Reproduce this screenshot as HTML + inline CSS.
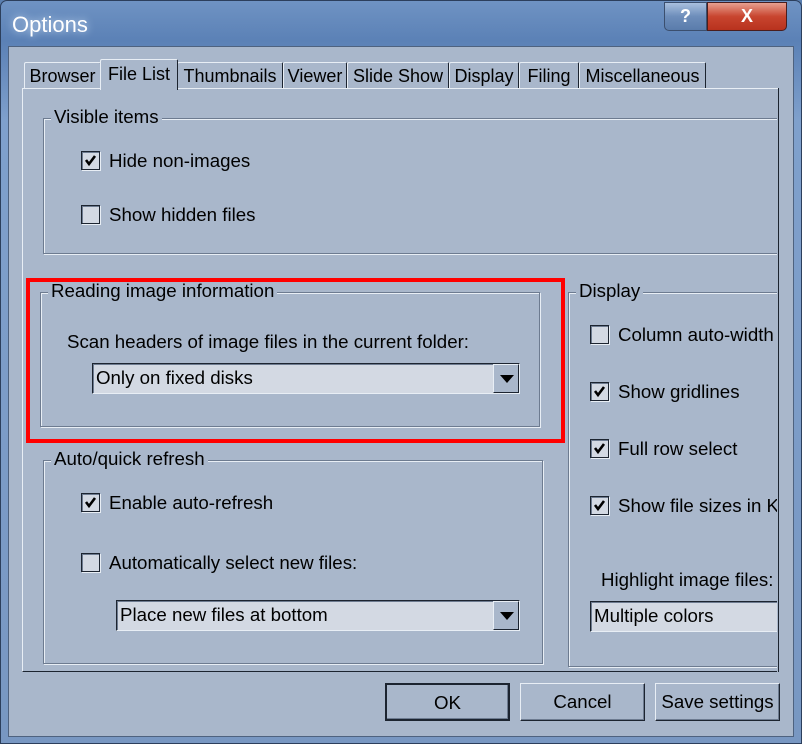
<!DOCTYPE html>
<html><head><meta charset="utf-8"><style>
*{box-sizing:border-box;margin:0;padding:0}
body{width:802px;height:744px;overflow:hidden;background:#5a7fb0;font-family:"Liberation Sans",sans-serif;font-size:18.7px;color:#000;position:relative}
.abs{position:absolute}
#frame{left:0;top:0;width:802px;height:744px;background:linear-gradient(180deg,#6f93c3 0,#5b81b6 40px,#7fa0cc 120px,#7897c2 744px);border:1px solid #2c3f5c;border-radius:7px 7px 0 0}
#client{left:8px;top:46px;width:786px;height:691px;background:#a9b7cb;border:1px solid #4e627f}
.t{position:absolute;white-space:nowrap;line-height:20px}
.grp{position:absolute;border:1px solid #6d7b90;box-shadow:1px 1px 0 #e8eef5,inset 1px 1px 0 #e8eef5}
.lbl{position:absolute;background:#a9b7cb;padding:0 3px;line-height:20px;white-space:nowrap}
.cb{position:absolute;width:19px;height:19px;background:#d3d9e3;border:1px solid #1c2430;box-shadow:inset 1px 1px 0 #6d7b90,1px 1px 0 #e8eef5}
.cb svg{position:absolute;left:1px;top:1px}
.combo{position:absolute;height:31px;background:#d3d9e3;border:1px solid #1c2430;border-right-color:#e8eef5;border-bottom-color:#e8eef5;box-shadow:inset 1px 1px 0 #6d7b90}
.combo .txt{position:absolute;left:3px;top:4px;line-height:20px;white-space:nowrap}
.combo .btn{position:absolute;right:0;top:0;width:26px;height:29px;background:#a9b7cb;border:1px solid #e8eef5;border-right-color:#1c2430;border-bottom-color:#1c2430}
.combo .btn:after{content:"";position:absolute;left:6px;top:10px;border-left:7px solid transparent;border-right:7px solid transparent;border-top:8px solid #000}
.pb{position:absolute;height:38px;background:#a9b7cb;border:1px solid #e8eef5;border-right-color:#1c2430;border-bottom-color:#1c2430;text-align:center;line-height:36px;box-shadow:inset -1px -1px 0 #6d7b90}
.tab{position:absolute;top:62px;height:27px;background:#a9b7cb;border:1px solid #e8eef5;border-right-color:#1c2430;border-bottom:none;text-align:center;line-height:26px;border-radius:2px 2px 0 0;font-size:18px;white-space:nowrap}
</style></head><body>
<div id="frame" class="abs"></div>
<div class="t" style="left:12px;top:15px;color:#fff;font-size:22px;text-shadow:0 0 8px #cfe0f5">Options</div>
<div class="abs" style="left:664px;top:2px;width:43px;height:29px;border:1px solid #3b4f6e;border-radius:0 0 0 5px;background:linear-gradient(#a9c0de,#6d8dba 50%,#5a7cab);color:#fff;text-align:center;font-weight:bold;line-height:27px;font-size:18px">?</div>
<div class="abs" style="left:707px;top:2px;width:80px;height:29px;border:1px solid #4a1e1e;border-radius:0 0 5px 0;background:linear-gradient(#e8a090,#c8452f 50%,#b8321e);color:#fff;text-align:center;font-weight:bold;line-height:27px;font-size:18px">X</div>
<div id="client" class="abs"></div>
<div class="tab" style="left:24px;width:77px">Browser</div>
<div class="tab" style="left:177px;width:106px">Thumbnails</div>
<div class="tab" style="left:283px;width:64px">Viewer</div>
<div class="tab" style="left:347px;width:102px">Slide Show</div>
<div class="tab" style="left:449px;width:70px">Display</div>
<div class="tab" style="left:519px;width:60px">Filing</div>
<div class="tab" style="left:579px;width:127px">Miscellaneous</div>
<div class="abs" style="left:22px;top:88px;width:757px;height:584px;border:1px solid #e8eef5;border-right-color:#1c2430;border-bottom-color:#1c2430;background:#a9b7cb"></div>
<div class="tab" style="left:100px;top:59px;width:78px;height:31px;border-bottom:none;line-height:28px;z-index:2">File List</div>
<div class="grp" style="left:43px;top:118px;width:745px;height:136px;border-right:none"></div>
<div class="lbl" style="left:51px;top:107px">Visible items</div>
<div class="cb" style="left:81px;top:151px"><svg width="15" height="15"><path d="M3 7l3 4 6-8" stroke="#000" stroke-width="2.6" fill="none"/></svg></div>
<div class="t" style="left:109px;top:151px">Hide non-images</div>
<div class="cb" style="left:81px;top:205px"></div>
<div class="t" style="left:109px;top:205px">Show hidden files</div>
<div class="grp" style="left:40px;top:292px;width:500px;height:135px"></div>
<div class="lbl" style="left:48px;top:281px">Reading image information</div>
<div class="t" style="left:67px;top:332px">Scan headers of image files in the current folder:</div>
<div class="combo" style="left:92px;top:363px;width:428px"><div class="txt">Only on fixed disks</div><div class="btn"></div></div>
<div class="abs" style="left:26px;top:278px;width:539px;height:165px;border:4px solid #ff0000"></div>
<div class="grp" style="left:43px;top:460px;width:500px;height:204px"></div>
<div class="lbl" style="left:51px;top:449px">Auto/quick refresh</div>
<div class="cb" style="left:81px;top:493px"><svg width="15" height="15"><path d="M3 7l3 4 6-8" stroke="#000" stroke-width="2.6" fill="none"/></svg></div>
<div class="t" style="left:109px;top:493px">Enable auto-refresh</div>
<div class="cb" style="left:81px;top:553px"></div>
<div class="t" style="left:109px;top:553px">Automatically select new files:</div>
<div class="combo" style="left:116px;top:600px;width:404px"><div class="txt">Place new files at bottom</div><div class="btn"></div></div>
<div class="grp" style="left:568px;top:292px;width:222px;height:375px;border-right:none"></div>
<div class="lbl" style="left:576px;top:281px">Display</div>
<div class="cb" style="left:590px;top:325px"></div>
<div class="t" style="left:618px;top:325px">Column auto-width</div>
<div class="cb" style="left:590px;top:382px"><svg width="15" height="15"><path d="M3 7l3 4 6-8" stroke="#000" stroke-width="2.6" fill="none"/></svg></div>
<div class="t" style="left:618px;top:382px">Show gridlines</div>
<div class="cb" style="left:590px;top:439px"><svg width="15" height="15"><path d="M3 7l3 4 6-8" stroke="#000" stroke-width="2.6" fill="none"/></svg></div>
<div class="t" style="left:618px;top:439px">Full row select</div>
<div class="cb" style="left:590px;top:496px"><svg width="15" height="15"><path d="M3 7l3 4 6-8" stroke="#000" stroke-width="2.6" fill="none"/></svg></div>
<div class="t" style="left:618px;top:496px">Show file sizes in KB</div>
<div class="t" style="left:601px;top:570px">Highlight image files:</div>
<div class="combo" style="left:590px;top:601px;width:190px;border-right:none"><div class="txt">Multiple colors</div></div>
<div class="abs" style="left:777px;top:89px;width:16px;height:583px;background:#a9b7cb"></div>
<div class="abs" style="left:778px;top:88px;width:1px;height:584px;background:#1c2430"></div>
<div class="pb" style="left:385px;top:683px;width:125px;border:2px solid #1c2430">OK</div>
<div class="pb" style="left:520px;top:683px;width:125px">Cancel</div>
<div class="pb" style="left:655px;top:683px;width:125px">Save settings</div>
</body></html>
